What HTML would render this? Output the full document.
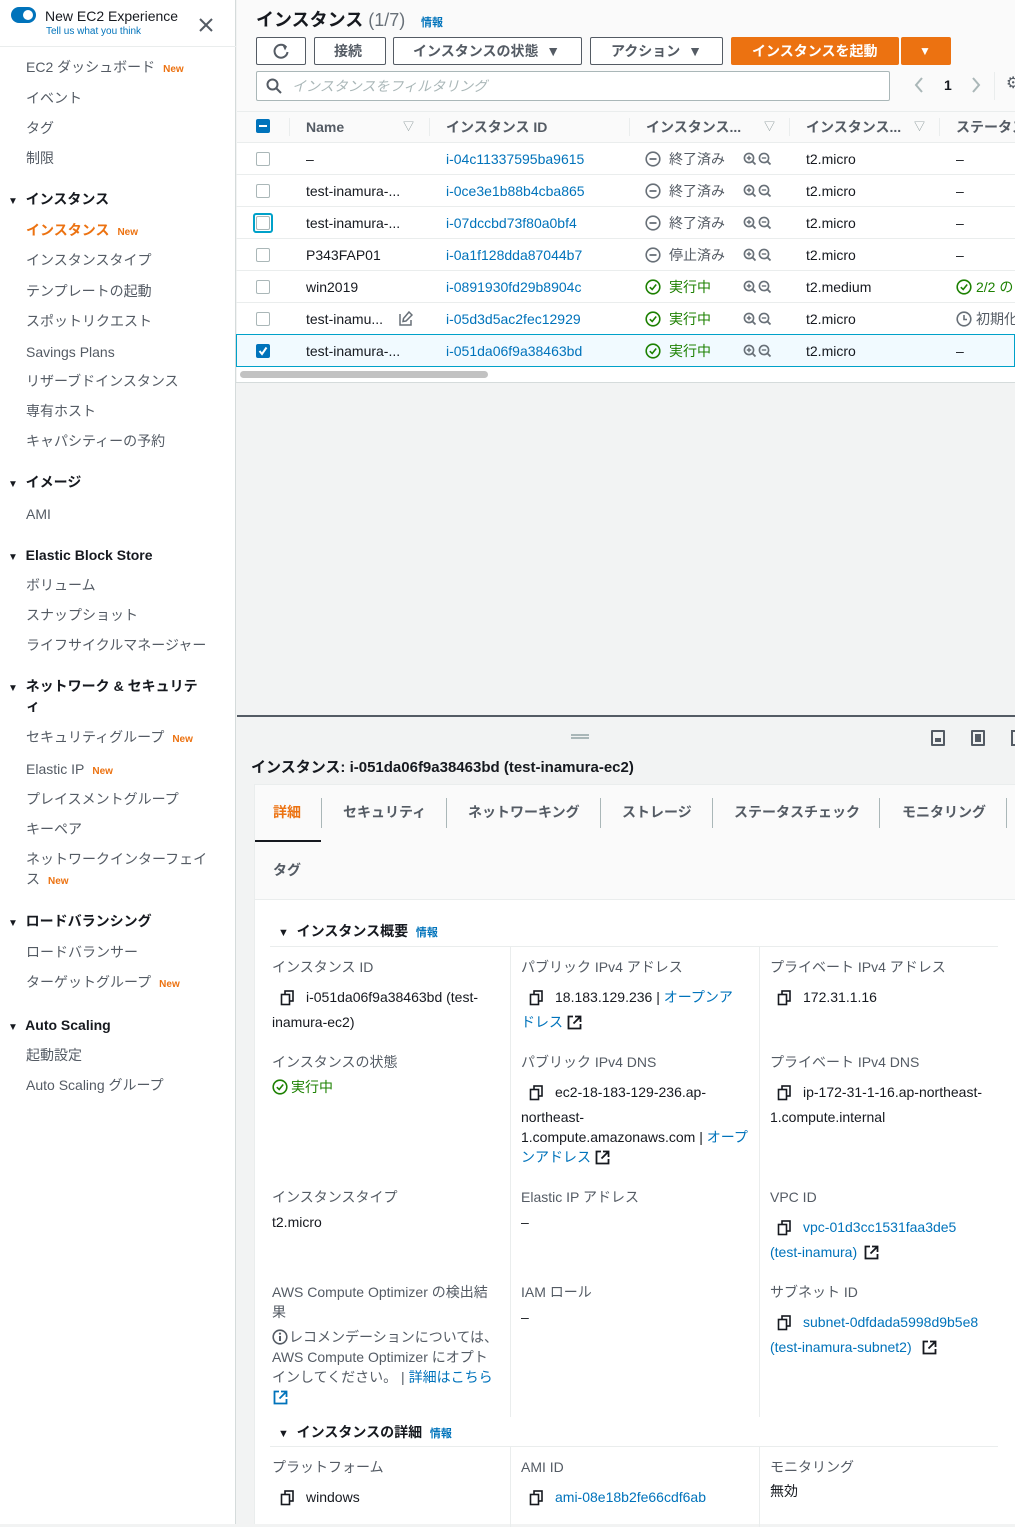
<!DOCTYPE html>
<html><head><meta charset="utf-8">
<style>
*{margin:0;padding:0;box-sizing:border-box}
body{width:1015px;height:1524px;overflow:hidden;position:relative;background:#f2f3f3;font-family:"Liberation Sans","Noto Sans CJK JP",sans-serif;font-size:14px;color:#16191f}
.t{position:absolute;white-space:nowrap;line-height:20px}
.g{color:#545b64}
.b{font-weight:bold}
.new{color:#ec7211;font-size:10px;font-weight:bold;margin-left:8px}
.lnk{color:#0073bb}
.grn{color:#1d8102}
.box{position:absolute}
.cb{position:absolute;width:14px;height:14px;border:1px solid #aab7b8;border-radius:2px;background:#fff}
.hl{position:absolute;left:236px;right:0;height:1px;background:#eaeded}
svg{vertical-align:middle}
</style></head><body>

<div class="box" style="left:0;top:0;width:236px;height:1524px;background:#fff;border-right:1px solid #d5dbdb"></div>
<div class="box" style="left:0;top:46px;width:236px;height:1px;background:#eaeded"></div>
<div class="box" style="left:11px;top:7px;width:25px;height:16px;border-radius:8px;background:#0073bb"></div>
<div class="box" style="left:23px;top:10px;width:10px;height:10px;border-radius:5px;background:#fff"></div>
<div class="t" style="left:45px;top:6px;font-size:14px">New EC2 Experience</div>
<div class="t" style="left:46px;top:24px;font-size:10px;line-height:16px;color:#0073bb">Tell us what you think</div>
<svg class="box" style="left:199px;top:18px" width="14" height="14"><path d="M1 1L13 13M13 1L1 13" stroke="#545b64" stroke-width="2"/></svg>

<div class="t g" style="left:26px;top:57px">EC2 ダッシュボード<span class="new">New</span></div>
<div class="t g" style="left:26px;top:88px">イベント</div>
<div class="t g" style="left:26px;top:118px">タグ</div>
<div class="t g" style="left:26px;top:148px">制限</div>
<div class="t b" style="left:8px;top:189px"><span style="font-size:10px">▼</span>&nbsp; インスタンス</div>
<div class="t b" style="left:26px;top:220px;color:#ec7211">インスタンス<span class="new">New</span></div>
<div class="t g" style="left:26px;top:250px">インスタンスタイプ</div>
<div class="t g" style="left:26px;top:281px">テンプレートの起動</div>
<div class="t g" style="left:26px;top:311px">スポットリクエスト</div>
<div class="t g" style="left:26px;top:342px">Savings Plans</div>
<div class="t g" style="left:26px;top:371px">リザーブドインスタンス</div>
<div class="t g" style="left:26px;top:401px">専有ホスト</div>
<div class="t g" style="left:26px;top:431px">キャパシティーの予約</div>
<div class="t b" style="left:8px;top:472px"><span style="font-size:10px">▼</span>&nbsp; イメージ</div>
<div class="t g" style="left:26px;top:504px">AMI</div>
<div class="t b" style="left:8px;top:545px"><span style="font-size:10px">▼</span>&nbsp; Elastic Block Store</div>
<div class="t g" style="left:26px;top:575px">ボリューム</div>
<div class="t g" style="left:26px;top:605px">スナップショット</div>
<div class="t g" style="left:26px;top:635px">ライフサイクルマネージャー</div>
<div class="t b" style="left:8px;top:676px"><span style="font-size:10px">▼</span>&nbsp; ネットワーク &amp; セキュリテ</div>
<div class="t b" style="left:26px;top:696px">ィ</div>
<div class="t g" style="left:26px;top:727px">セキュリティグループ<span class="new">New</span></div>
<div class="t g" style="left:26px;top:759px">Elastic IP<span class="new">New</span></div>
<div class="t g" style="left:26px;top:789px">プレイスメントグループ</div>
<div class="t g" style="left:26px;top:819px">キーペア</div>
<div class="t g" style="left:26px;top:849px">ネットワークインターフェイ</div>
<div class="t g" style="left:26px;top:869px">ス<span class="new">New</span></div>
<div class="t b" style="left:8px;top:911px"><span style="font-size:10px">▼</span>&nbsp; ロードバランシング</div>
<div class="t g" style="left:26px;top:942px">ロードバランサー</div>
<div class="t g" style="left:26px;top:972px">ターゲットグループ<span class="new">New</span></div>
<div class="t b" style="left:8px;top:1015px"><span style="font-size:10px">▼</span>&nbsp; Auto Scaling</div>
<div class="t g" style="left:26px;top:1045px">起動設定</div>
<div class="t g" style="left:26px;top:1075px">Auto Scaling グループ</div>

<div class="box" style="left:237px;top:0;right:0;height:112px;background:#fafafa"></div>
<div class="t b" style="left:256px;top:8px;font-size:18px;line-height:24px">インスタンス <span style="font-weight:normal;color:#687078">(1/7)</span></div>
<div class="t b lnk" style="left:421px;top:13px;font-size:11px">情報</div>
<div class="box" style="left:256px;top:37px;width:50px;height:28px;border:1px solid #545b64;border-radius:2px;background:#fff"></div>
<svg class="box" style="left:272px;top:42px" width="18" height="18"><path d="M14 5A6.5 6.5 0 1 0 15.5 10" fill="none" stroke="#545b64" stroke-width="2"/><path d="M10 2L15 4.5L13 8.5Z" fill="#545b64"/></svg>
<div class="box" style="left:314px;top:37px;width:72px;height:28px;border:1px solid #545b64;border-radius:2px;background:#fff"></div>
<div class="t b g" style="left:334px;top:41px">接続</div>
<div class="box" style="left:393px;top:37px;width:189px;height:28px;border:1px solid #545b64;border-radius:2px;background:#fff"></div>
<div class="t b g" style="left:413px;top:41px">インスタンスの状態 &nbsp;▼</div>
<div class="box" style="left:590px;top:37px;width:133px;height:28px;border:1px solid #545b64;border-radius:2px;background:#fff"></div>
<div class="t b g" style="left:611px;top:41px">アクション &nbsp;▼</div>
<div class="box" style="left:731px;top:37px;width:168px;height:28px;background:#ec7211;border-radius:2px"></div>
<div class="t b" style="left:752px;top:41px;color:#fff">インスタンスを起動</div>
<div class="box" style="left:901px;top:37px;width:50px;height:28px;background:#ec7211;border-radius:2px"></div>
<div class="t" style="left:919px;top:41px;color:#fff;font-size:12px">▼</div>
<div class="box" style="left:256px;top:71px;width:634px;height:30px;border:1px solid #aab7b8;border-radius:2px;background:#fff"></div>
<svg class="box" style="left:266px;top:78px" width="16" height="16"><circle cx="6.5" cy="6.5" r="5" fill="none" stroke="#545b64" stroke-width="2"/><path d="M10 10L15 15" stroke="#545b64" stroke-width="2"/></svg>
<div class="t" style="left:292px;top:76px;color:#aab7b8;font-style:italic">インスタンスをフィルタリング</div>
<svg class="box" style="left:914px;top:77px" width="10" height="16"><path d="M8 1L2 8L8 15" fill="none" stroke="#aab7b8" stroke-width="2"/></svg>
<div class="t b" style="left:944px;top:75px">1</div>
<svg class="box" style="left:971px;top:77px" width="10" height="16"><path d="M2 1L8 8L2 15" fill="none" stroke="#aab7b8" stroke-width="2"/></svg>
<div class="box" style="left:994px;top:72px;width:1px;height:28px;background:#eaeded"></div>
<div class="t" style="left:1006px;top:74px;color:#545b64;font-size:16px">⚙</div>

<div class="box" style="left:237px;top:111px;right:0;height:272px;background:#fff;border-top:1px solid #eaeded"></div>
<div class="box" style="left:237px;top:112px;right:0;height:31px;background:#fafafa;border-bottom:1px solid #eaeded"></div>
<div class="box" style="left:256px;top:119px;width:14px;height:14px;background:#0073bb;border-radius:2px"></div>
<div class="box" style="left:259px;top:125px;width:8px;height:2px;background:#fff"></div>
<div class="box" style="left:289px;top:118px;width:1px;height:18px;background:#eaeded"></div>
<div class="t b" style="left:306px;top:117px;color:#545b64">Name</div>
<div class="t" style="left:403px;top:117px;color:#879596;font-size:11px">▽</div>
<div class="box" style="left:429px;top:118px;width:1px;height:18px;background:#eaeded"></div>
<div class="t b" style="left:446px;top:117px;color:#545b64">インスタンス ID</div>
<div class="box" style="left:629px;top:118px;width:1px;height:18px;background:#eaeded"></div>
<div class="t b" style="left:646px;top:117px;color:#545b64">インスタンス...</div>
<div class="t" style="left:764px;top:117px;color:#879596;font-size:11px">▽</div>
<div class="box" style="left:789px;top:118px;width:1px;height:18px;background:#eaeded"></div>
<div class="t b" style="left:806px;top:117px;color:#545b64">インスタンス...</div>
<div class="t" style="left:914px;top:117px;color:#879596;font-size:11px">▽</div>
<div class="box" style="left:939px;top:118px;width:1px;height:18px;background:#eaeded"></div>
<div class="t b" style="left:956px;top:117px;color:#545b64">ステータス</div>

<div class="hl" style="top:174px"></div><div class="hl" style="top:206px"></div><div class="hl" style="top:238px"></div><div class="hl" style="top:270px"></div><div class="hl" style="top:302px"></div>
<div class="box" style="left:236px;top:334px;right:0;height:33px;background:#f1faff;border:1px solid #00a1c9"></div>

<div class="cb" style="left:256px;top:152px"></div>
<div class="cb" style="left:256px;top:184px"></div>
<div class="box" style="left:253px;top:213px;width:20px;height:20px;border:2px solid #00a1c9;border-radius:3px"></div><div class="cb" style="left:256px;top:216px"></div>
<div class="cb" style="left:256px;top:248px"></div>
<div class="cb" style="left:256px;top:280px"></div>
<div class="cb" style="left:256px;top:312px"></div>
<div class="box" style="left:256px;top:344px;width:14px;height:14px;background:#0073bb;border-radius:2px"></div>
<svg class="box" style="left:256px;top:344px" width="14" height="14"><path d="M3.5 7L6 10L10.5 3.5" fill="none" stroke="#fff" stroke-width="2"/></svg>

<div class="t" style="left:306px;top:149px">–</div>
<div class="t" style="left:306px;top:181px">test-inamura-...</div>
<div class="t" style="left:306px;top:213px">test-inamura-...</div>
<div class="t" style="left:306px;top:245px">P343FAP01</div>
<div class="t" style="left:306px;top:277px">win2019</div>
<div class="t" style="left:306px;top:309px">test-inamu...</div>
<svg class="box" style="left:399px;top:311px" width="14" height="15"><path d="M10 1L13 4L7 10L4 10.5L4.5 7.5Z M1 3V14H12V9" fill="none" stroke="#687078" stroke-width="1.5"/></svg>
<div class="t" style="left:306px;top:341px">test-inamura-...</div>

<div class="t lnk" style="left:446px;top:149px">i-04c11337595ba9615</div>
<div class="t lnk" style="left:446px;top:181px">i-0ce3e1b88b4cba865</div>
<div class="t lnk" style="left:446px;top:213px">i-07dccbd73f80a0bf4</div>
<div class="t lnk" style="left:446px;top:245px">i-0a1f128dda87044b7</div>
<div class="t lnk" style="left:446px;top:277px">i-0891930fd29b8904c</div>
<div class="t lnk" style="left:446px;top:309px">i-05d3d5ac2fec12929</div>
<div class="t lnk" style="left:446px;top:341px">i-051da06f9a38463bd</div>

<svg width="0" height="0" style="position:absolute"><defs>
<g id="minus"><circle cx="8" cy="8" r="6.8" fill="none" stroke="#687078" stroke-width="1.6"/><path d="M4.5 8H11.5" stroke="#687078" stroke-width="1.8"/></g>
<g id="ok"><circle cx="8" cy="8" r="6.8" fill="none" stroke="#1d8102" stroke-width="1.6"/><path d="M4.8 8.2L7.2 10.5L11.2 5.5" fill="none" stroke="#1d8102" stroke-width="1.6"/></g>
<g id="zm"><circle cx="6" cy="6" r="4.6" fill="none" stroke="#687078" stroke-width="1.6"/><path d="M9.3 9.3L12.5 12.5" stroke="#687078" stroke-width="1.8"/><path d="M3.8 6H8.2M6 3.8V8.2" stroke="#687078" stroke-width="1.4"/><circle cx="21" cy="6" r="4.6" fill="none" stroke="#687078" stroke-width="1.6"/><path d="M24.3 9.3L27.5 12.5" stroke="#687078" stroke-width="1.8"/><path d="M18.8 6H23.2" stroke="#687078" stroke-width="1.4"/></g>
<g id="cp"><rect x="5" y="1" width="8" height="10" fill="none" stroke="#16191f" stroke-width="1.6"/><rect x="1.5" y="4.5" width="8" height="10" fill="#fff" stroke="#16191f" stroke-width="1.6"/></g>
<g id="ext"><path d="M6 1.5H1.5V13.5H13.5V9" fill="none" stroke="#16191f" stroke-width="1.8"/><path d="M8 1.5H13.5V7M13.5 1.5L6.5 8.5" fill="none" stroke="#16191f" stroke-width="1.8"/></g>
<g id="extb"><path d="M6 1.5H1.5V13.5H13.5V9" fill="none" stroke="#0073bb" stroke-width="1.8"/><path d="M8 1.5H13.5V7M13.5 1.5L6.5 8.5" fill="none" stroke="#0073bb" stroke-width="1.8"/></g>
</defs></svg>

<svg class="box" style="left:645px;top:151px" width="16" height="16"><use href="#minus"/></svg><div class="t g" style="left:669px;top:149px">終了済み</div>
<svg class="box" style="left:645px;top:183px" width="16" height="16"><use href="#minus"/></svg><div class="t g" style="left:669px;top:181px">終了済み</div>
<svg class="box" style="left:645px;top:215px" width="16" height="16"><use href="#minus"/></svg><div class="t g" style="left:669px;top:213px">終了済み</div>
<svg class="box" style="left:645px;top:247px" width="16" height="16"><use href="#minus"/></svg><div class="t g" style="left:669px;top:245px">停止済み</div>
<svg class="box" style="left:645px;top:279px" width="16" height="16"><use href="#ok"/></svg><div class="t grn" style="left:669px;top:277px">実行中</div>
<svg class="box" style="left:645px;top:311px" width="16" height="16"><use href="#ok"/></svg><div class="t grn" style="left:669px;top:309px">実行中</div>
<svg class="box" style="left:645px;top:343px" width="16" height="16"><use href="#ok"/></svg><div class="t grn" style="left:669px;top:341px">実行中</div>

<svg class="box" style="left:743px;top:152px" width="30" height="14"><use href="#zm"/></svg>
<svg class="box" style="left:743px;top:184px" width="30" height="14"><use href="#zm"/></svg>
<svg class="box" style="left:743px;top:216px" width="30" height="14"><use href="#zm"/></svg>
<svg class="box" style="left:743px;top:248px" width="30" height="14"><use href="#zm"/></svg>
<svg class="box" style="left:743px;top:280px" width="30" height="14"><use href="#zm"/></svg>
<svg class="box" style="left:743px;top:312px" width="30" height="14"><use href="#zm"/></svg>
<svg class="box" style="left:743px;top:344px" width="30" height="14"><use href="#zm"/></svg>

<div class="t" style="left:806px;top:149px">t2.micro</div>
<div class="t" style="left:806px;top:181px">t2.micro</div>
<div class="t" style="left:806px;top:213px">t2.micro</div>
<div class="t" style="left:806px;top:245px">t2.micro</div>
<div class="t" style="left:806px;top:277px">t2.medium</div>
<div class="t" style="left:806px;top:309px">t2.micro</div>
<div class="t" style="left:806px;top:341px">t2.micro</div>

<div class="t" style="left:956px;top:149px">–</div>
<div class="t" style="left:956px;top:181px">–</div>
<div class="t" style="left:956px;top:213px">–</div>
<div class="t" style="left:956px;top:245px">–</div>
<svg class="box" style="left:956px;top:279px" width="16" height="16"><use href="#ok"/></svg><div class="t grn" style="left:976px;top:277px">2/2 の</div>
<svg class="box" style="left:956px;top:311px" width="16" height="16"><circle cx="8" cy="8" r="6.8" fill="none" stroke="#687078" stroke-width="1.6"/><path d="M8 4V8.5H11" fill="none" stroke="#687078" stroke-width="1.6"/></svg><div class="t g" style="left:976px;top:309px">初期化</div>
<div class="t" style="left:956px;top:341px">–</div>

<div class="box" style="left:240px;top:371px;width:248px;height:7px;background:#c2c2c2;border-radius:4px"></div>
<div class="hl" style="top:382px;background:#d5dbdb"></div>

<div class="box" style="left:237px;top:715px;right:0;height:2px;background:#545b64"></div>
<div class="box" style="left:571px;top:734px;width:18px;height:1.5px;background:#aab7b8"></div>
<div class="box" style="left:571px;top:737px;width:18px;height:1.5px;background:#aab7b8"></div>
<div class="box" style="left:931px;top:730px;width:14px;height:16px;border:2px solid #545b64;border-radius:1px"></div><div class="box" style="left:935px;top:738px;width:6px;height:4px;background:#545b64"></div>
<div class="box" style="left:971px;top:730px;width:14px;height:16px;border:2px solid #545b64;border-radius:1px"></div><div class="box" style="left:975px;top:734px;width:6px;height:8px;background:#545b64"></div>
<div class="box" style="left:1011px;top:730px;width:14px;height:16px;border:2px solid #545b64"></div>
<div class="t b" style="left:251px;top:758px;font-size:15px">インスタンス: i-051da06f9a38463bd (test-inamura-ec2)</div>

<div class="box" style="left:254px;top:784px;right:0;height:740px;background:#fff;border-left:1px solid #eaeded;border-top:1px solid #eaeded"></div>
<div class="box" style="left:255px;top:785px;right:0;height:115px;background:#fafafa;border-bottom:1px solid #eaeded"></div>
<div class="t b" style="left:273px;top:802px;color:#ec7211">詳細</div>
<div class="box" style="left:255px;top:840px;width:66px;height:2px;background:#16191f"></div>
<div class="box" style="left:321px;top:798px;width:1px;height:30px;background:#aab7b8"></div>
<div class="t b g" style="left:343px;top:802px">セキュリティ</div>
<div class="box" style="left:446px;top:798px;width:1px;height:30px;background:#aab7b8"></div>
<div class="t b g" style="left:468px;top:802px">ネットワーキング</div>
<div class="box" style="left:600px;top:798px;width:1px;height:30px;background:#aab7b8"></div>
<div class="t b g" style="left:622px;top:802px">ストレージ</div>
<div class="box" style="left:712px;top:798px;width:1px;height:30px;background:#aab7b8"></div>
<div class="t b g" style="left:734px;top:802px">ステータスチェック</div>
<div class="box" style="left:879px;top:798px;width:1px;height:30px;background:#aab7b8"></div>
<div class="t b g" style="left:902px;top:802px">モニタリング</div>
<div class="box" style="left:1006px;top:798px;width:1px;height:30px;background:#aab7b8"></div>
<div class="t b g" style="left:273px;top:860px">タグ</div>

<div class="t b" style="left:278px;top:921px"><span style="font-size:11px">▼</span>&nbsp; インスタンス概要 &nbsp;<span class="lnk" style="font-size:11px">情報</span></div>
<div class="box" style="left:270px;top:946px;width:728px;height:1px;background:#eaeded"></div>
<div class="box" style="left:510px;top:947px;width:1px;height:470px;background:#eaeded"></div>
<div class="box" style="left:759px;top:947px;width:1px;height:470px;background:#eaeded"></div>

<div class="t g" style="left:272px;top:957px">インスタンス ID</div>
<svg class="box" style="left:280px;top:990px" width="15" height="16"><use href="#cp"/></svg>
<div class="t" style="left:306px;top:987px">i-051da06f9a38463bd (test-</div>
<div class="t" style="left:272px;top:1012px">inamura-ec2)</div>
<div class="t g" style="left:272px;top:1052px">インスタンスの状態</div>
<svg class="box" style="left:272px;top:1079px" width="16" height="16"><use href="#ok"/></svg><div class="t grn" style="left:291px;top:1077px">実行中</div>
<div class="t g" style="left:272px;top:1187px">インスタンスタイプ</div>
<div class="t" style="left:272px;top:1212px">t2.micro</div>
<div class="t g" style="left:272px;top:1282px">AWS Compute Optimizer の検出結</div>
<div class="t g" style="left:272px;top:1302px">果</div>
<svg class="box" style="left:272px;top:1329px" width="16" height="16"><circle cx="8" cy="8" r="6.8" fill="none" stroke="#545b64" stroke-width="1.6"/><path d="M8 7V12" stroke="#545b64" stroke-width="2"/><circle cx="8" cy="4.6" r="1.1" fill="#545b64"/></svg>
<div class="t g" style="left:289px;top:1327px">レコメンデーションについては、</div>
<div class="t g" style="left:272px;top:1347px">AWS Compute Optimizer にオプト</div>
<div class="t g" style="left:272px;top:1367px">インしてください。 | <span class="lnk">詳細はこちら</span></div>
<svg class="box" style="left:273px;top:1390px" width="15" height="15"><use href="#extb"/></svg>

<div class="t g" style="left:521px;top:957px">パブリック IPv4 アドレス</div>
<svg class="box" style="left:529px;top:990px" width="15" height="16"><use href="#cp"/></svg>
<div class="t" style="left:555px;top:987px">18.183.129.236 | <span class="lnk">オープンア</span></div>
<div class="t lnk" style="left:521px;top:1012px">ドレス</div>
<svg class="box" style="left:567px;top:1015px" width="15" height="15"><use href="#ext"/></svg>
<div class="t g" style="left:521px;top:1052px">パブリック IPv4 DNS</div>
<svg class="box" style="left:529px;top:1085px" width="15" height="16"><use href="#cp"/></svg>
<div class="t" style="left:555px;top:1082px">ec2-18-183-129-236.ap-</div>
<div class="t" style="left:521px;top:1107px">northeast-</div>
<div class="t" style="left:521px;top:1127px">1.compute.amazonaws.com | <span class="lnk">オープ</span></div>
<div class="t lnk" style="left:521px;top:1147px">ンアドレス</div>
<svg class="box" style="left:595px;top:1150px" width="15" height="15"><use href="#ext"/></svg>
<div class="t g" style="left:521px;top:1187px">Elastic IP アドレス</div>
<div class="t" style="left:521px;top:1212px">–</div>
<div class="t g" style="left:521px;top:1282px">IAM ロール</div>
<div class="t" style="left:521px;top:1307px">–</div>

<div class="t g" style="left:770px;top:957px">プライベート IPv4 アドレス</div>
<svg class="box" style="left:777px;top:990px" width="15" height="16"><use href="#cp"/></svg>
<div class="t" style="left:803px;top:987px">172.31.1.16</div>
<div class="t g" style="left:770px;top:1052px">プライベート IPv4 DNS</div>
<svg class="box" style="left:777px;top:1085px" width="15" height="16"><use href="#cp"/></svg>
<div class="t" style="left:803px;top:1082px">ip-172-31-1-16.ap-northeast-</div>
<div class="t" style="left:770px;top:1107px">1.compute.internal</div>
<div class="t g" style="left:770px;top:1187px">VPC ID</div>
<svg class="box" style="left:777px;top:1220px" width="15" height="16"><use href="#cp"/></svg>
<div class="t lnk" style="left:803px;top:1217px">vpc-01d3cc1531faa3de5</div>
<div class="t lnk" style="left:770px;top:1242px">(test-inamura)</div>
<svg class="box" style="left:864px;top:1245px" width="15" height="15"><use href="#ext"/></svg>
<div class="t g" style="left:770px;top:1282px">サブネット ID</div>
<svg class="box" style="left:777px;top:1315px" width="15" height="16"><use href="#cp"/></svg>
<div class="t lnk" style="left:803px;top:1312px">subnet-0dfdada5998d9b5e8</div>
<div class="t lnk" style="left:770px;top:1337px">(test-inamura-subnet2)</div>
<svg class="box" style="left:922px;top:1340px" width="15" height="15"><use href="#ext"/></svg>

<div class="t b" style="left:278px;top:1422px"><span style="font-size:11px">▼</span>&nbsp; インスタンスの詳細 &nbsp;<span class="lnk" style="font-size:11px">情報</span></div>
<div class="box" style="left:270px;top:1446px;width:728px;height:1px;background:#eaeded"></div>
<div class="box" style="left:510px;top:1447px;width:1px;height:80px;background:#eaeded"></div>
<div class="box" style="left:759px;top:1447px;width:1px;height:80px;background:#eaeded"></div>
<div class="t g" style="left:272px;top:1457px">プラットフォーム</div>
<svg class="box" style="left:280px;top:1490px" width="15" height="16"><use href="#cp"/></svg>
<div class="t" style="left:306px;top:1487px">windows</div>
<div class="t g" style="left:521px;top:1457px">AMI ID</div>
<svg class="box" style="left:529px;top:1490px" width="15" height="16"><use href="#cp"/></svg>
<div class="t lnk" style="left:555px;top:1487px">ami-08e18b2fe66cdf6ab</div>
<div class="t g" style="left:770px;top:1457px">モニタリング</div>
<div class="t" style="left:770px;top:1481px">無効</div>

</body></html>
